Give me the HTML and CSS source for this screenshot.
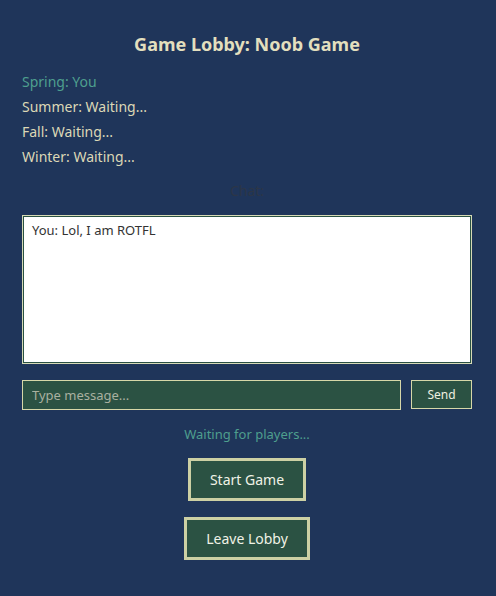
FILE: index.html
```html
<!DOCTYPE html>
<html>
<head>
<meta charset="utf-8">
<link rel="stylesheet" href="styles.css">
</head>
<body>
<div class="lobby">
  <h1 class="title">Game Lobby: Noob Game</h1>
  <ul class="players">
    <li class="player you">Spring: You</li>
    <li class="player">Summer: Waiting...</li>
    <li class="player">Fall: Waiting...</li>
    <li class="player">Winter: Waiting...</li>
  </ul>
  <div class="chat-label">Chat:</div>
  <div class="chat-box">
    <div class="msg">You: Lol, I am ROTFL</div>
  </div>
  <div class="chat-input-row">
    <input class="chat-input" type="text" placeholder="Type message...">
    <button class="send-btn">Send</button>
  </div>
  <div class="status">Waiting for players...</div>
  <div class="actions">
    <button class="big-btn">Start Game</button>
    <button class="big-btn">Leave Lobby</button>
  </div>
</div>
</body>
</html>
```
FILE: styles.css
```css
html, body {
  margin: 0;
  padding: 0;
  background: #1f355a;
  font-family: "Noto Sans", "Open Sans", sans-serif;
}
.lobby {
  padding: 32px 24px 0 22px;
  display: flex;
  flex-direction: column;
}
.title {
  margin: 0;
  text-align: center;
  font-size: 18px;
  font-weight: 700;
  color: #e3dfbe;
  line-height: 25px;
}
.players {
  list-style: none;
  margin: 12px 0 0 0;
  padding: 0;
}
.player {
  font-size: 14px;
  line-height: 25px;
  color: #dcd8b6;
}
.player.you {
  color: #4e9f8e;
}
.chat-label {
  text-align: center;
  font-size: 14px;
  color: #2c3647;
  margin-top: 12px;
  line-height: 20px;
}
.chat-box {
  margin-top: 14px;
  height: 136px;
  background: #ffffff;
  border: 1px solid #d6dab6;
  box-shadow: inset 0 0 0 1px #2a5243;
  padding: 5px 9px 6px;
}
.msg {
  font-size: 13px;
  color: #333;
  line-height: 18px;
}
.chat-input-row {
  display: flex;
  align-items: flex-start;
  gap: 10px;
  margin-top: 16px;
}
.chat-input {
  flex: 1;
  height: 30px;
  box-sizing: border-box;
  margin: 0;
  background: #2b5243;
  border: 1px solid #d6d7a8;
  padding: 0 9px;
  font-family: inherit;
  font-size: 13px;
  color: #dcd8b6;
  outline: none;
}
.chat-input::placeholder {
  color: #a9b0a0;
}
.send-btn {
  width: 61px;
  height: 29px;
  box-sizing: border-box;
  margin: 0;
  background: #2b5243;
  border: 1px solid #d6d7a8;
  color: #eef0e0;
  font-family: inherit;
  font-size: 12px;
}
.status {
  text-align: center;
  font-size: 13px;
  color: #4e9f8e;
  margin-top: 15px;
  line-height: 18px;
}
.actions {
  display: flex;
  flex-direction: column;
  align-items: center;
  gap: 16px;
  margin-top: 15px;
}
.big-btn {
  height: 43px;
  box-sizing: border-box;
  padding: 0 19px;
  margin: 0;
  background: #2b5243;
  border: 3px solid #ccd0a4;
  color: #f0f2e6;
  font-family: inherit;
  font-size: 14px;
}
```
